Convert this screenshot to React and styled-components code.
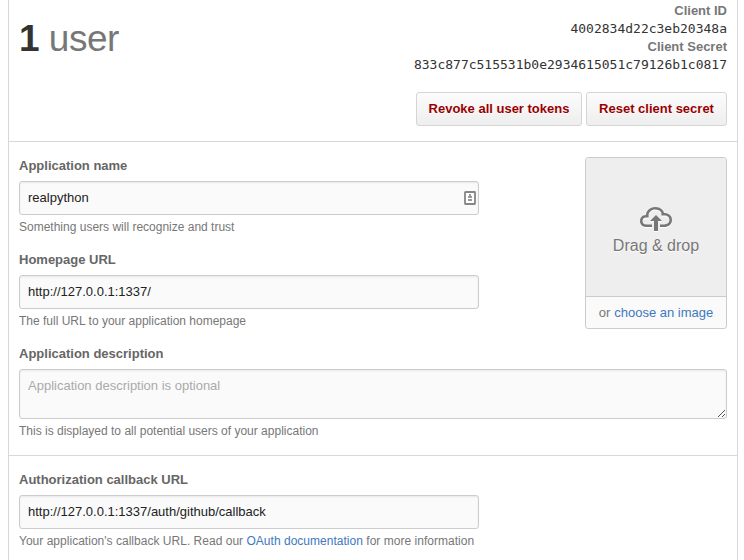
import React from "react";
import styled, { createGlobalStyle } from "styled-components";

const GlobalStyle = createGlobalStyle`
  *, *::before, *::after { box-sizing: border-box; }
  body {
    margin: 0;
    background: #fff;
    color: #333;
    font: 13px/18px "Liberation Sans", Arial, sans-serif;
    overflow: hidden;
  }
`;

const Panel = styled.main`
  width: 730px;
  height: 560px;
  margin-left: 8px;
  border: solid #d8d8d8;
  border-width: 0 1px;
  overflow: hidden;
`;

const Header = styled.header`
  display: flex;
  justify-content: space-between;
  height: 142px;
  padding: 2px 10px 0;
  border-bottom: 1px solid #d8d8d8;
`;

const UserCount = styled.h1`
  margin: 17px 0 0;
  font-size: 37px;
  line-height: 40px;
  font-weight: 400;
  color: #777;
  letter-spacing: -0.5px;
  strong { color: #333; font-weight: 700; }
`;

const Credentials = styled.div`
  display: flex;
  flex-direction: column;
  align-items: flex-end;
`;

const KeyList = styled.dl`
  margin: 0 0 18px;
  text-align: right;
  dt { height: 18px; font-weight: 700; color: #777; }
  dd { margin: 0; height: 18px; font: 13px/18px "DejaVu Sans Mono", monospace; color: #333; }
`;

const ButtonRow = styled.div`
  display: flex;
  gap: 4px;
`;

const DangerButton = styled.button`
  width: ${(p) => p.$width}px;
  height: 34px;
  padding: 0 0 1px;
  border: 1px solid #d5d5d5;
  border-radius: 3px;
  background: linear-gradient(#fcfcfc, #eee);
  color: #900;
  font: bold 13px/18px "Liberation Sans", Arial, sans-serif;
  text-shadow: 0 1px 0 rgba(255, 255, 255, 0.9);
  white-space: nowrap;
`;

const Section = styled.section`
  display: flex;
  flex-direction: column;
  padding: 15px 10px;
  border-bottom: 1px solid #d8d8d8;
`;

const TopRow = styled.div`
  display: flex;
  justify-content: space-between;
  height: 188px;
`;

const Field = styled.div`
  display: flex;
  flex-direction: column;
  align-items: flex-start;
  width: ${(p) => (p.$wide ? "708px" : "460px")};
  & + & { margin-top: 15px; }
`;

const Label = styled.label`
  height: 18px;
  margin-bottom: 6px;
  font-weight: 700;
  color: #666;
`;

const InputBox = styled.div`
  display: flex;
  align-items: center;
  width: 100%;
  height: ${(p) => p.$height || 34}px;
  border: 1px solid #ccc;
  border-radius: 3px;
  background: #fafafa;
  box-shadow: inset 0 1px 2px rgba(0, 0, 0, 0.075);
`;

const TextInput = styled.input`
  flex: 1;
  min-width: 0;
  height: 30px;
  padding: 0 8px 2px;
  border: 0;
  outline: 0;
  background: transparent;
  color: #222;
  font: 13px/18px "Liberation Sans", Arial, sans-serif;
`;

const TextArea = styled.textarea`
  flex: 1;
  align-self: stretch;
  padding: 7px 8px;
  border: 0;
  outline: 0;
  resize: none;
  background: transparent;
  font: 13px/18px "Liberation Sans", Arial, sans-serif;
  &::placeholder { color: #aaa; opacity: 1; }
`;

const KeychainIcon = styled.svg`
  width: 12px;
  height: 14px;
  margin-right: 2px;
  flex: none;
`;

const Grip = styled.svg`
  width: 7px;
  height: 7px;
  align-self: flex-end;
  margin: 0 1px 1px 0;
  flex: none;
  fill: #555;
`;

const Hint = styled.p`
  height: 18px;
  margin: 3px 0 0;
  font-size: 12px;
  color: #777;
  white-space: nowrap;
  letter-spacing: ${(p) => p.$tracking || 0}px;
`;

const Link = styled.a`
  color: #4078c0;
  text-decoration: none;
`;

const Uploader = styled.aside`
  display: flex;
  flex-direction: column;
  width: 142px;
  height: 172px;
  border: 1px solid #ccc;
  border-radius: 3px;
  background: #fafafa;
  overflow: hidden;
`;

const DropZone = styled.div`
  display: flex;
  flex-direction: column;
  align-items: center;
  height: 138px;
  padding-top: 45px;
  background: #eee;
  color: #777;
  font-size: 16px;
  line-height: 22px;
  text-shadow: 0 1px 0 #fff;
`;

const CloudIcon = styled.svg`
  width: 32px;
  height: 32px;
  fill: #777;
  filter: drop-shadow(0 1px 0 #fff);
`;

const ChooseBar = styled.div`
  display: flex;
  flex: 1;
  align-items: center;
  justify-content: center;
  gap: 4px;
  border-top: 1px solid #ccc;
  color: #777;
`;

const GRIP_DOTS = [
  [0, 6], [1, 5], [2, 4], [3, 3], [4, 2], [5, 1], [6, 0],
  [4, 6], [5, 5], [6, 4],
];

export default function App() {
  return (
    <>
      <GlobalStyle />
      <Panel>
        <Header>
          <UserCount><strong>1</strong> user</UserCount>
          <Credentials>
            <KeyList>
              <dt>Client ID</dt>
              <dd>4002834d22c3eb20348a</dd>
              <dt>Client Secret</dt>
              <dd>833c877c515531b0e2934615051c79126b1c0817</dd>
            </KeyList>
            <ButtonRow>
              <DangerButton $width={166}>Revoke all user tokens</DangerButton>
              <DangerButton $width={141}>Reset client secret</DangerButton>
            </ButtonRow>
          </Credentials>
        </Header>

        <Section>
          <TopRow>
            <div>
              <Field>
                <Label htmlFor="name">Application name</Label>
                <InputBox>
                  <TextInput id="name" defaultValue="realpython" />
                  <KeychainIcon viewBox="0 0 12 14">
                    <rect x="1" y="1" width="10" height="12" rx="0.5" fill="#fff" stroke="#858585" strokeWidth="1.8" />
                    <path d="M5 3h2v2h1v2H4V5h1zM4 8h4v2H4z" fill="#999" />
                  </KeychainIcon>
                </InputBox>
                <Hint>Something users will recognize and trust</Hint>
              </Field>
              <Field>
                <Label htmlFor="homepage">Homepage URL</Label>
                <InputBox>
                  <TextInput id="homepage" defaultValue="http://127.0.0.1:1337/" />
                </InputBox>
                <Hint>The full URL to your application homepage</Hint>
              </Field>
            </div>
            <Uploader>
              <DropZone>
                <CloudIcon viewBox="0 0 16 16">
                  <path d="M7 9H5l3-3 3 3H9v5H7V9z m5-4c0-0.44-0.91-3-4.5-3-2.42 0-4.5 1.92-4.5 4C1.02 6 0 7.52 0 9c0 1.53 1 3 3 3 0.44 0 2.66 0 3 0v-1.3H3C1.38 10.7 1.3 9.28 1.3 9c0-0.17 0.05-1.7 1.7-1.7h1.3v-1.3c0-1.39 1.56-2.7 3.2-2.7 2.55 0 3.13 1.55 3.2 1.8v1.2h1.3c0.81 0 2.7 0.22 2.7 2.2 0 2.09-2.25 2.2-2.7 2.2H10v1.3c0.38 0 1.98 0 2 0 2.08 0 4-1.16 4-3.5C16 6.06 14.08 5 12 5z" />
                </CloudIcon>
                <span>Drag &amp; drop</span>
              </DropZone>
              <ChooseBar>or <Link>choose an image</Link></ChooseBar>
            </Uploader>
          </TopRow>
          <Field $wide>
            <Label htmlFor="description">Application description</Label>
            <InputBox $height={50}>
              <TextArea id="description" placeholder="Application description is optional" />
              <Grip viewBox="0 0 7 7" shapeRendering="crispEdges">
                {GRIP_DOTS.map(([x, y]) => (
                  <rect key={`${x}-${y}`} x={x} y={y} width="1" height="1" />
                ))}
              </Grip>
            </InputBox>
            <Hint>This is displayed to all potential users of your application</Hint>
          </Field>
        </Section>

        <Section>
          <Field>
            <Label htmlFor="callback">Authorization callback URL</Label>
            <InputBox>
              <TextInput id="callback" defaultValue="http://127.0.0.1:1337/auth/github/callback" />
            </InputBox>
            <Hint $tracking={0.02}>
              Your application's callback URL. Read our <Link>OAuth documentation</Link> for more information
            </Hint>
          </Field>
        </Section>
      </Panel>
    </>
  );
}
